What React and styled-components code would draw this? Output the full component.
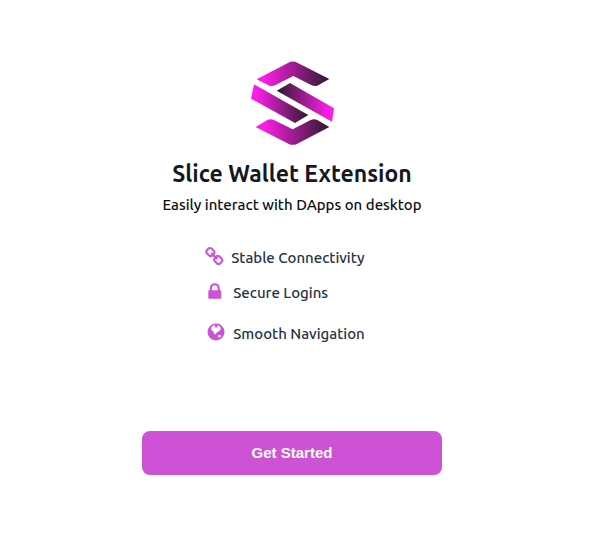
import React from "react";
import styled, { createGlobalStyle } from "styled-components";

const GlobalStyle = createGlobalStyle`
  * { box-sizing: border-box; }
  body {
    margin: 0;
    background: #ffffff;
    font-family: Ubuntu, "Noto Sans", sans-serif;
  }
`;

const Page = styled.main`
  display: flex;
  flex-direction: column;
  align-items: center;
  padding: 60px 24px 60px 16px;
`;

const Logo = styled.svg`
  width: 86px;
  height: 86px;
`;

const Title = styled.h1`
  margin: 12px 0 0;
  font-size: 23px;
  line-height: 32px;
  font-weight: 700;
  color: #14181f;
`;

const Subtitle = styled.p`
  margin: 3px 0 0;
  font-size: 15px;
  line-height: 24px;
  font-weight: 500;
  color: #0c0f14;
`;

const Features = styled.ul`
  display: flex;
  flex-direction: column;
  gap: 11px;
  margin: 29px 0 0;
  padding: 0 14px 0 0;
  list-style: none;
`;

const Feature = styled.li`
  display: flex;
  align-items: center;
  gap: 6px;
  padding-left: ${(p) => p.$inset || 0}px;
  margin-top: ${(p) => p.$space || 0}px;
  font-size: 15px;
  line-height: 24px;
  font-weight: 500;
  color: #253248;
`;

const Icon = styled.svg`
  flex: none;
  width: 20px;
  height: 20px;
  margin-bottom: 4px;
  fill: #cd52d6;
`;

const StartButton = styled.button`
  width: 100%;
  max-width: 300px;
  margin-top: 85px;
  padding: 12px 16px;
  border: 0;
  border-radius: 8px;
  background: #cd52d6;
  color: #ffffff;
  font-family: "Liberation Sans", Arial, sans-serif;
  font-size: 15px;
  line-height: 20px;
  font-weight: 700;
  cursor: pointer;
`;

function SliceLogo() {
  return (
    <Logo viewBox="27 30 258 258" role="img" aria-label="Slice">
      <defs>
        <linearGradient id="fade" x1="0" y1="0" x2="1" y2="0">
          <stop offset="0.1" stopColor="#fb1ee6" />
          <stop offset="1" stopColor="#2c1a2b" />
        </linearGradient>
        <linearGradient id="rise" x1="0" y1="0" x2="1" y2="0">
          <stop offset="0" stopColor="#2c1a2b" />
          <stop offset="0.9" stopColor="#fb1ee6" />
        </linearGradient>
      </defs>
      <path fill="url(#fade)" d="M50 88 145 38Q158 31 172 38L268 87 232 107Q224 110 215 106L160 78 105 106Q97 110 88 107Z" />
      <path fill="url(#fade)" d="M42 103 205 195 165 219 33 146Z" />
      <path fill="url(#rise)" d="M110 122 150 99 282 175 276 215Z" />
      <path fill="url(#fade)" d="M47 231 82 210Q91 205 102 210L158 238 212 210Q222 205 232 210L268 231 172 281Q158 288 145 281Z" />
    </Logo>
  );
}

const features = [
  {
    label: "Stable Connectivity",
    box: "64 -64 1792 1792",
    path: "M1520 1216q0-40-28-68l-208-208q-28-28-68-28-42 0-72 32 3 3 19 18.5t21.5 21.5 15 19 13 25.5 3.5 27.5q0 40-28 68t-68 28q-15 0-27.5-3.5t-25.5-13-19-15-21.5-21.5-18.5-19q-33 31-33 73 0 40 28 68l206 207q27 27 68 27 40 0 68-26l147-146q28-28 28-67zm-703-705q0-40-28-68l-206-207q-28-28-68-28-39 0-68 27l-147 146q-28 28-28 67 0 40 28 68l208 208q27 27 68 27 42 0 72-31-3-3-19-18.5t-21.5-21.5-15-19-13-25.5-3.5-27.5q0-40 28-68t68-28q15 0 27.5 3.5t25.5 13 19 15 21.5 21.5 18.5 19q33-31 33-73zm895 705q0 120-85 203l-147 146q-83 83-203 83-121 0-204-85l-206-207q-83-83-83-203 0-123 88-209l-88-88q-86 88-208 88-120 0-204-84l-208-208q-84-84-84-204t85-203l147-146q83-83 203-83 121 0 204 85l206 207q83 83 83 203 0 123-88 209l88 88q86-88 208-88 120 0 204 84l208 208q84 84 84 204z",
  },
  {
    label: "Secure Logins",
    inset: 2,
    box: "200 -64 1792 1792",
    path: "M640 768h512v-192q0-106-75-181t-181-75-181 75-75 181v192zm832 96v576q0 40-28 68t-68 28h-960q-40 0-68-28t-28-68v-576q0-40 28-68t68-28h32v-192q0-184 132-316t316-132 316 132 132 316v192h32q40 0 68 28t28 68z",
  },
  {
    label: "Smooth Navigation",
    inset: 2,
    space: 6,
    box: "0 -1 20 20",
    path: "M9 .5a8.5 8.5 0 1 1 0 17a8.5 8.5 0 0 1 0-17zM5.2 3L4.2 5 4.6 7.2 6.4 8.6 7.4 11 8.6 11.2 9.8 9.4 12 8.2 13.8 6 13.2 3.8 11.4 2.6 10 2.4 10.6 3.8 9.2 4.8 7.8 4 8.2 2.2 6.6 2.2zM11.2 12L10.8 13.8 12 14.6 14.2 13.4 13.8 11.9z",
  },
];

export default function App() {
  return (
    <>
      <GlobalStyle />
      <Page>
        <SliceLogo />
        <Title>Slice Wallet Extension</Title>
        <Subtitle>Easily interact with DApps on desktop</Subtitle>
        <Features>
          {features.map((f) => (
            <Feature key={f.label} $inset={f.inset} $space={f.space}>
              <Icon viewBox={f.box} aria-hidden="true">
                <path fillRule="evenodd" d={f.path} />
              </Icon>
              {f.label}
            </Feature>
          ))}
        </Features>
        <StartButton type="button">Get Started</StartButton>
      </Page>
    </>
  );
}
